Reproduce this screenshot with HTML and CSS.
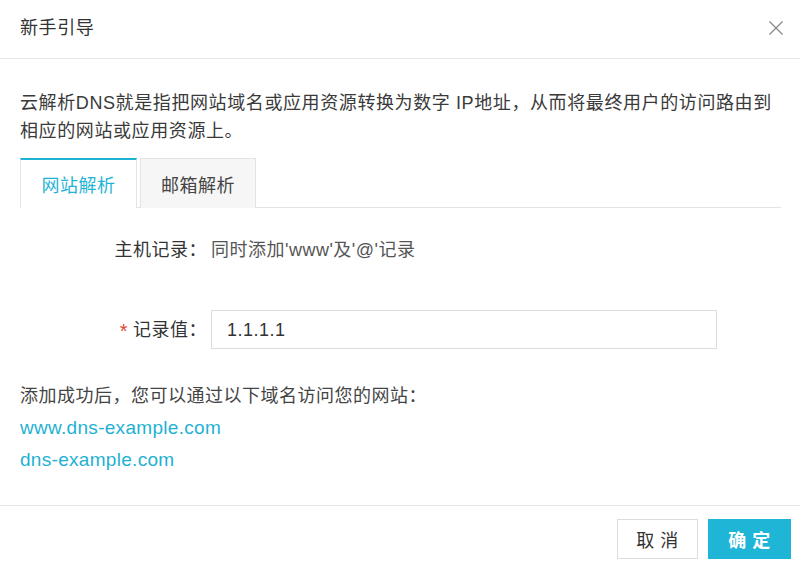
FILE: index.html
```html
<!DOCTYPE html>
<html lang="zh-CN">
<head>
<meta charset="utf-8">
<title>新手引导</title>
<link rel="stylesheet" href="styles.css">
</head>
<body>
<div class="dialog">
  <div class="header">
    <div class="title">新手引导</div>
    <svg class="close" width="14" height="14" viewBox="0 0 14 14"><path d="M0.5 0.5 L13.5 13.5 M13.5 0.5 L0.5 13.5" stroke="#8a8a8a" stroke-width="1.3" fill="none"/></svg>
  </div>
  <div class="body">
    <p class="desc">云解析DNS就是指把网站域名或应用资源转换为数字 IP地址，从而将最终用户的访问路由到相应的网站或应用资源上。</p>
    <div class="tabs">
      <div class="tab active">网站解析</div>
      <div class="tab">邮箱解析</div>
    </div>
    <div class="row host">
      <div class="label">主机记录：</div>
      <div class="value">同时添加'www'及'@'记录</div>
    </div>
    <div class="row record">
      <div class="label"><span class="req">*</span>记录值：</div>
      <div class="input">1.1.1.1</div>
    </div>
    <div class="result">
      <div class="note">添加成功后，您可以通过以下域名访问您的网站：</div>
      <a class="link">www.dns-example.com</a>
      <a class="link">dns-example.com</a>
    </div>
  </div>
  <div class="footer">
    <button class="btn cancel">取 消</button>
    <button class="btn ok">确 定</button>
  </div>
</div>
</body>
</html>
```
FILE: styles.css
```css
* { box-sizing: border-box; }
html, body { margin: 0; padding: 0; background: #fff; }
body {
  font-family: "Liberation Sans", "Noto Sans CJK SC", sans-serif;
  color: #333;
  font-size: 18px;
  letter-spacing: 0.5px;
}
.dialog { width: 800px; height: 567px; overflow: hidden; }
.header {
  height: 59px;
  padding: 0 17px 3px 20px;
  display: flex;
  align-items: center;
  justify-content: space-between;
  border-bottom: 1px solid #e6e6ea;
}
.title { font-size: 18px; color: #333; line-height: 28px; letter-spacing: 0.6px; }
.close { display: block; }
.body { padding: 30px 19px 0 20px; }
.desc { margin: 0; line-height: 28px; color: #3a3a3a; letter-spacing: 0.6px; }
.tabs {
  margin-top: 13px;
  display: flex;
  gap: 3px;
  border-bottom: 1px solid #e3e3e8;
  height: 50px;
}
.tab {
  height: 50px;
  width: 116px;
  display: flex;
  align-items: center;
  justify-content: center;
  border: 1px solid #e3e3e3;
  border-bottom: none;
  background: #f6f6f6;
  color: #444;
  margin-bottom: -1px;
}
.tab.active {
  width: 117px;
  background: #fff;
  border-top: 2px solid #1fb4d6;
  color: #1fb4d6;
  height: 50px;
}
.row { display: flex; align-items: center; line-height: 28px; }
.label { width: 187px; text-align: right; color: #333; flex: none; }
.host { margin-top: 28px; }
.host .value { margin-left: 4px; color: #555; }
.record { margin-top: 46px; }
.req { color: #e0463a; margin-right: 5px; font-size: 20px; position: relative; top: 2px; }
.input {
  margin-left: 4px;
  width: 506px;
  height: 39px;
  border: 1px solid #dcdcdc;
  padding-left: 15px;
  display: flex;
  align-items: center;
  color: #333;
}
.result { margin-top: 31px; }
.note { line-height: 32px; color: #444; }
.link { display: block; line-height: 32px; color: #1fb1d3; text-decoration: none; font-size: 19px; letter-spacing: 0.3px; }
.footer {
  margin-top: 29px;
  border-top: 1px solid #e6e6ea;
  padding: 13px 9px 0 0;
  display: flex;
  justify-content: flex-end;
  gap: 10px;
}
.btn {
  font-family: "Liberation Sans", "Noto Sans CJK SC", sans-serif;
  font-size: 18px;
  letter-spacing: 0.5px;
  height: 40px;
  border: 1px solid #dcdcdc;
  background: #fff;
  color: #333;
  padding: 0;
  cursor: pointer;
}
.cancel { width: 81px; }
.ok { width: 83px; background: #1fb5d6; border-color: #1fb5d6; color: #fff; font-weight: bold; }
```
